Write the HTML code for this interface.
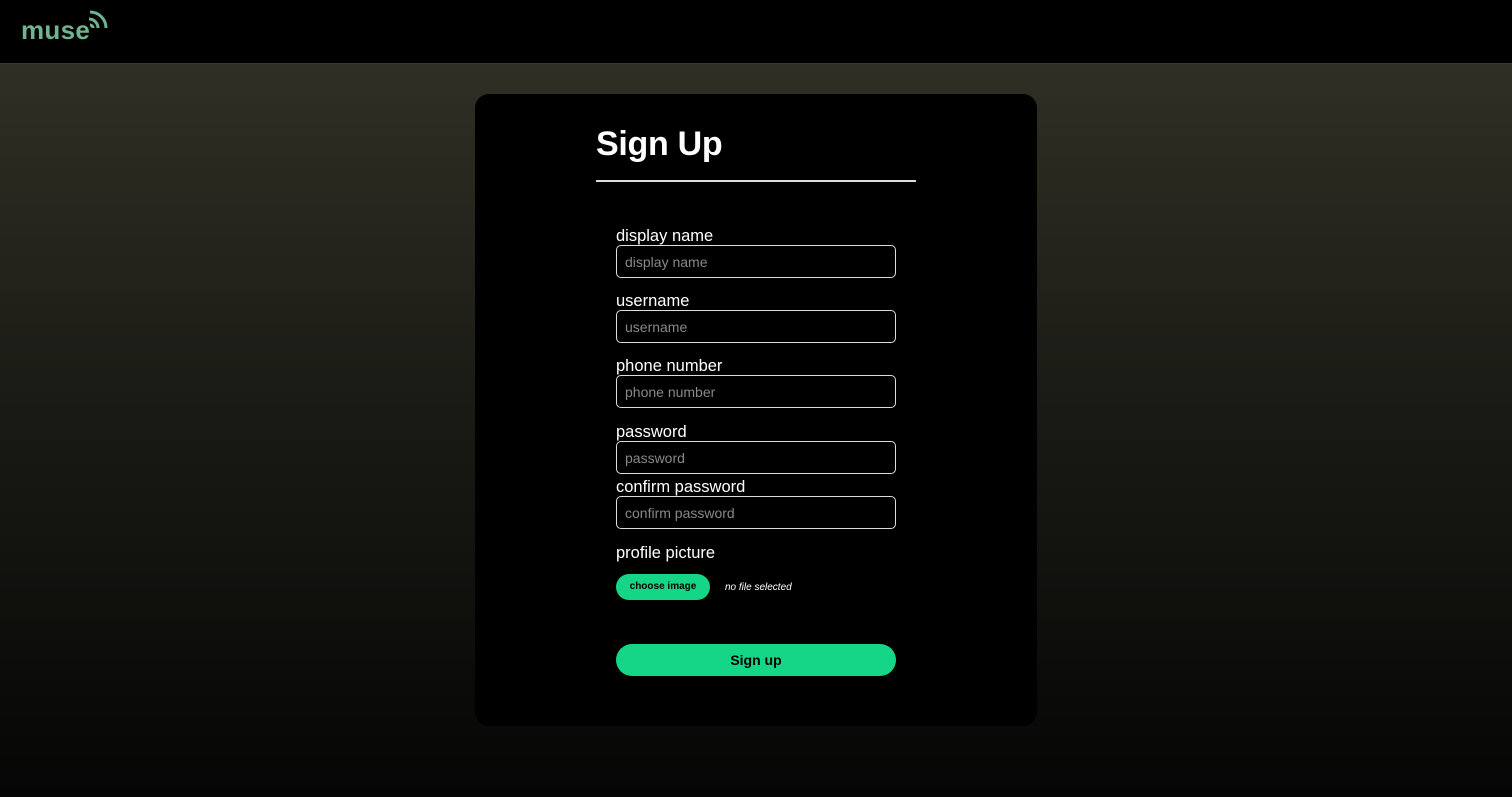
<!DOCTYPE html>
<html><head><meta charset="utf-8"><style>
*{box-sizing:border-box;margin:0;padding:0}
html,body{width:1512px;height:797px;overflow:hidden}
body{font-family:"Liberation Sans",sans-serif;background:linear-gradient(#2f2f25 65px,#1c1c16 380px,#050505 797px);position:relative;color:#fff}
.hdr{position:absolute;left:0;top:0;width:1512px;height:64px;background:#000;border-bottom:1px solid #3a3a30}
.logo{position:absolute;left:21px;top:15px;color:#6fb48f;font-size:26px;font-weight:bold;letter-spacing:0.3px}
.card{position:absolute;left:475px;top:94px;width:562px;height:632px;background:#000;border-radius:14px}
h1{position:absolute;left:596px;top:125px;font-size:34px;font-weight:bold;letter-spacing:-0.3px}
.hr{position:absolute;left:596px;top:180px;width:320px;height:2px;background:#ddd}
.lbl{position:absolute;left:616px;font-size:16.5px}
.inp{position:absolute;left:616px;width:280px;height:33px;border:1.5px solid #ddd;border-radius:5px;color:#888;font-size:14px;padding:8px 0 0 8px}
.ch{position:absolute;left:616px;top:574px;width:94px;height:26px;background:#15d686;border-radius:13px;color:#000;font-size:10px;font-weight:bold;text-align:center;line-height:26px}
.nf{position:absolute;left:725px;top:582px;font-size:10px;font-style:italic}
.su{position:absolute;left:616px;top:644px;width:280px;height:32px;background:#15d686;border-radius:16px;color:#000;font-weight:bold;font-size:14px;text-align:center;line-height:32px}
</style></head><body>
<div class="hdr"><div class="logo">muse</div>
<svg style="position:absolute;left:86px;top:9px" width="24" height="24" viewBox="0 0 24 24" fill="none" stroke="#6fb48f" stroke-width="3"><path d="M3 10a9 9 0 0 1 9 9"/><path d="M4 3a16 16 0 0 1 16 16"/><path d="M4 16a3 3 0 0 1 3 3"/></svg>
</div>
<div class="card"></div>
<h1>Sign Up</h1><div class="hr"></div>
<div class="lbl" style="top:227px">display name</div><div class="inp" style="top:245px">display name</div>
<div class="lbl" style="top:292px">username</div><div class="inp" style="top:310px">username</div>
<div class="lbl" style="top:357px">phone number</div><div class="inp" style="top:375px">phone number</div>
<div class="lbl" style="top:423px">password</div><div class="inp" style="top:441px">password</div>
<div class="lbl" style="top:478px">confirm password</div><div class="inp" style="top:496px">confirm password</div>
<div class="lbl" style="top:544px">profile picture</div>
<div class="ch">choose image</div><div class="nf">no file selected</div>
<div class="su">Sign up</div>
</body></html>
